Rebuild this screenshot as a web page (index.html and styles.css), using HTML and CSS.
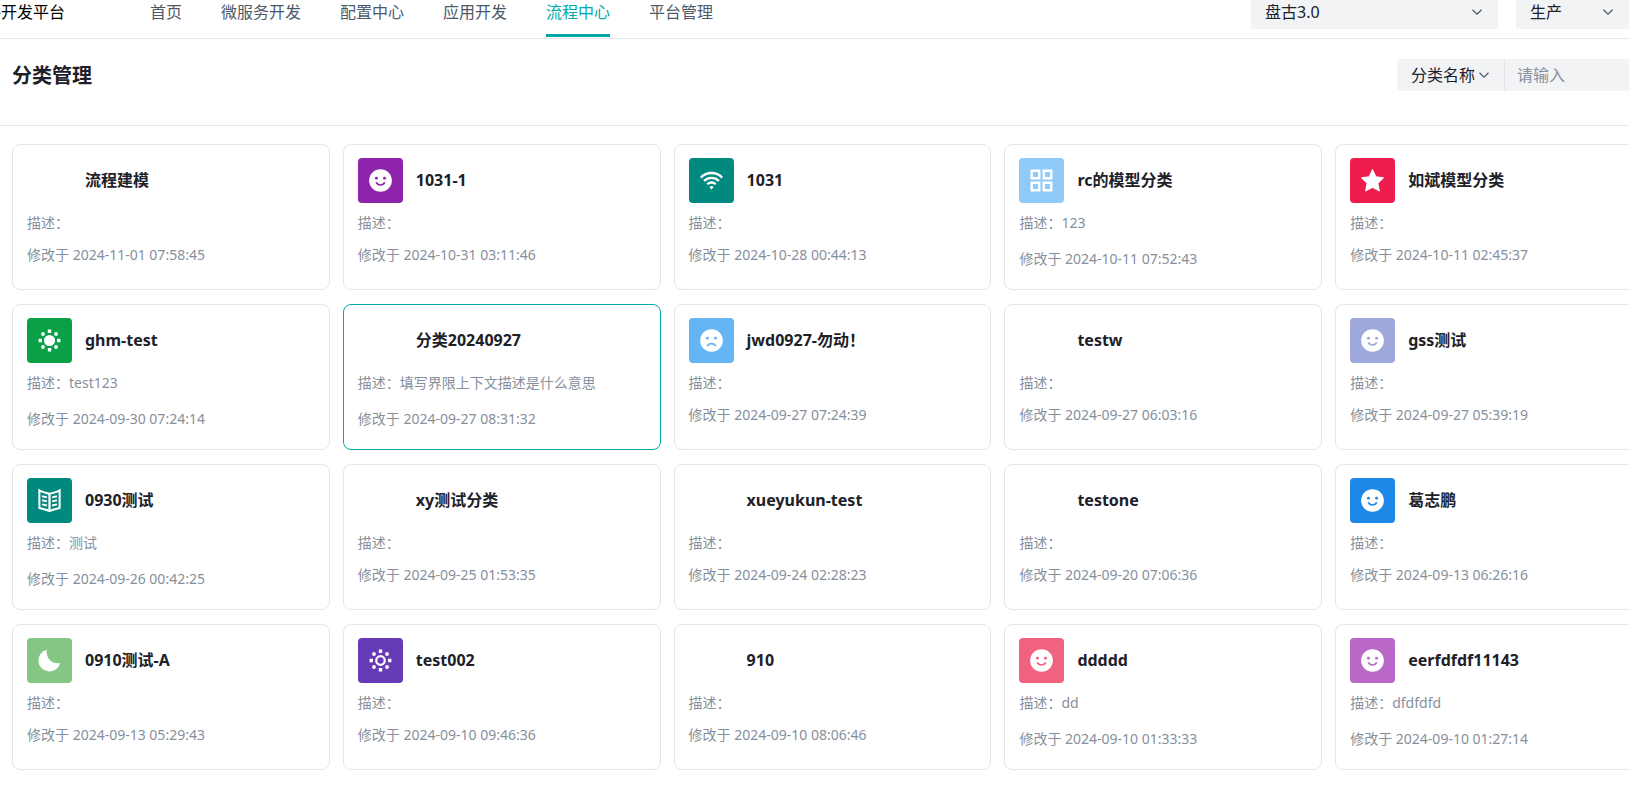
FILE: index.html
```html
<!DOCTYPE html>
<html lang="zh-CN">
<head>
<meta charset="utf-8">
<meta name="viewport" content="width=device-width, initial-scale=1">
<title>分类管理</title>
<link rel="stylesheet" href="styles.css">
</head>
<body>
<svg class="sprite" aria-hidden="true">
  <symbol id="chevron" viewBox="0 0 12 12"><path d="M1.5 3.8 6 8.2l4.500-4.400" fill="none" stroke="currentColor" stroke-width="1.300"/></symbol>
  <symbol id="smile" viewBox="0 0 24 24"><circle cx="12" cy="12" r="10.100" fill="#fff"/><circle cx="8.400" cy="9.900" r="1.300" fill="currentColor"/><circle cx="15.600" cy="9.900" r="1.300" fill="currentColor"/><path d="M8.200 13.700a4.300 4.300 0 0 0 7.600 0" fill="none" stroke="currentColor" stroke-width="1.500"/></symbol>
  <symbol id="sad" viewBox="0 0 24 24"><circle cx="12" cy="12" r="10.100" fill="#fff"/><circle cx="8.400" cy="9.900" r="1.300" fill="currentColor"/><circle cx="15.600" cy="9.900" r="1.300" fill="currentColor"/><path d="M8.200 17a4.300 4.300 0 0 1 7.600 0" fill="none" stroke="currentColor" stroke-width="1.500"/></symbol>
  <symbol id="wifi" viewBox="0 0 24 24"><g fill="none" stroke="#fff" stroke-width="2.100"><path d="M2.500 9.400a13.200 13.200 0 0 1 19 0"/><path d="M5.400 12.400a9.300 9.300 0 0 1 13.200 0"/><path d="M8.300 15.300a5.200 5.200 0 0 1 7.400 0"/></g><path d="M12 19.900l-1.900-2.100a2.600 2.600 0 0 1 3.800 0z" fill="#fff"/></symbol>
  <symbol id="grid" viewBox="0 0 24 24"><g fill="none" stroke="#fff" stroke-width="2.100"><path d="M3.300 3.300h6.700v6.700h-6.700z"/><path d="M14 3.300h6.700v6.700h-6.700z"/><path d="M3.300 14h6.700v6.700h-6.700z"/><path d="M14 14h6.700v6.700h-6.700z"/></g></symbol>
  <symbol id="star" viewBox="0 0 24 24"><path d="M12 2.500l2.900 6.200 6.700.900-4.900 4.700 1.300 6.900-6-3.300-6 3.300 1.300-6.900-4.900-4.700 6.700-.900z" fill="#fff" stroke="#fff" stroke-linejoin="round"/></symbol>
  <symbol id="rays" viewBox="0 0 24 24"><g fill="#fff"><path d="M10.500 2.300h3v3h-3zM10.500 18.700h3v3h-3zM2.300 10.500h3v3h-3zM18.700 10.500h3v3h-3z"/><circle cx="6.200" cy="6.200" r="1.700"/><circle cx="17.800" cy="6.200" r="1.700"/><circle cx="6.200" cy="17.800" r="1.700"/><circle cx="17.800" cy="17.800" r="1.700"/></g></symbol>
  <symbol id="sun" viewBox="0 0 24 24"><use href="#rays"/><circle cx="12" cy="12" r="4.900" fill="#fff"/></symbol>
  <symbol id="sun-line" viewBox="0 0 24 24"><use href="#rays"/><circle cx="12" cy="12" r="3.800" fill="none" stroke="#fff" stroke-width="2"/></symbol>
  <symbol id="moon" viewBox="0 0 24 24"><path d="M9.500 2.500C8.800 9.500 13.500 15.600 21.400 14.400A9.800 9.800 0 1 1 9.500 2.500z" fill="#fff"/></symbol>
  <symbol id="book" viewBox="0 0 24 24"><g fill="none" stroke="#fff" stroke-width="1.800"><path d="M12 5.900C9 5.300 5.600 4.500 3 3v15.600c3.200.700 6.200 1.500 9 2.700 2.800-1.200 5.800-2 9-2.700V3c-2.600 1.500-6 2.300-9 2.900z"/><path d="M12 5.700v15.600" stroke-width="2"/><path d="M5.400 8.200l4.300 1M5.400 11.800l4.300 1M5.400 15.400l4.300 1M18.600 8.200l-4.300 1M18.600 11.800l-4.300 1M18.600 15.400l-4.300 1" stroke-width="1.700"/></g></symbol>
</svg>

<header class="topbar">
  <div class="brand"><span>件开发平台</span></div>
  <nav class="nav">
    <a href="#">首页</a>
    <a href="#">微服务开发</a>
    <a href="#">配置中心</a>
    <a href="#">应用开发</a>
    <a class="active" href="#" aria-current="page">流程中心</a>
    <a href="#">平台管理</a>
  </nav>
  <div class="switchers">
    <div class="picker picker-project">
      <select aria-label="项目"><option>盘古3.0</option></select>
      <svg class="chevron"><use href="#chevron"/></svg>
    </div>
    <div class="picker picker-env">
      <select aria-label="环境"><option>生产</option></select>
      <svg class="chevron"><use href="#chevron"/></svg>
    </div>
  </div>
</header>

<section class="page-head">
  <h1>分类管理</h1>
  <form class="search">
    <div class="picker picker-field">
      <select aria-label="搜索字段"><option>分类名称</option></select>
      <svg class="chevron"><use href="#chevron"/></svg>
    </div>
    <input type="text" placeholder="请输入" aria-label="搜索内容">
  </form>
</section>

<main class="cards">
  <article class="card"><div class="card-head"><span class="tile"></span><h2>流程建模</h2></div><p class="desc">描述：</p><p class="date">修改于 2024-11-01 07:58:45</p></article>
  <article class="card"><div class="card-head"><span class="tile purple"><svg><use href="#smile"/></svg></span><h2>1031-1</h2></div><p class="desc">描述：</p><p class="date">修改于 2024-10-31 03:11:46</p></article>
  <article class="card"><div class="card-head"><span class="tile teal"><svg><use href="#wifi"/></svg></span><h2>1031</h2></div><p class="desc">描述：</p><p class="date">修改于 2024-10-28 00:44:13</p></article>
  <article class="card"><div class="card-head"><span class="tile sky"><svg><use href="#grid"/></svg></span><h2>rc的模型分类</h2></div><p class="desc filled">描述：123</p><p class="date">修改于 2024-10-11 07:52:43</p></article>
  <article class="card"><div class="card-head"><span class="tile red"><svg><use href="#star"/></svg></span><h2>如斌模型分类</h2></div><p class="desc">描述：</p><p class="date">修改于 2024-10-11 02:45:37</p></article>

  <article class="card"><div class="card-head"><span class="tile green"><svg><use href="#sun"/></svg></span><h2>ghm-test</h2></div><p class="desc filled">描述：test123</p><p class="date">修改于 2024-09-30 07:24:14</p></article>
  <article class="card selected"><div class="card-head"><span class="tile"></span><h2>分类20240927</h2></div><p class="desc filled">描述：填写界限上下文描述是什么意思</p><p class="date">修改于 2024-09-27 08:31:32</p></article>
  <article class="card"><div class="card-head"><span class="tile azure"><svg><use href="#sad"/></svg></span><h2>jwd0927-勿动！</h2></div><p class="desc">描述：</p><p class="date">修改于 2024-09-27 07:24:39</p></article>
  <article class="card"><div class="card-head"><span class="tile"></span><h2>testw</h2></div><p class="desc">描述：</p><p class="date">修改于 2024-09-27 06:03:16</p></article>
  <article class="card"><div class="card-head"><span class="tile lavender"><svg><use href="#smile"/></svg></span><h2>gss测试</h2></div><p class="desc">描述：</p><p class="date">修改于 2024-09-27 05:39:19</p></article>

  <article class="card"><div class="card-head"><span class="tile teal"><svg><use href="#book"/></svg></span><h2>0930测试</h2></div><p class="desc filled">描述：测试</p><p class="date">修改于 2024-09-26 00:42:25</p></article>
  <article class="card"><div class="card-head"><span class="tile"></span><h2>xy测试分类</h2></div><p class="desc">描述：</p><p class="date">修改于 2024-09-25 01:53:35</p></article>
  <article class="card"><div class="card-head"><span class="tile"></span><h2>xueyukun-test</h2></div><p class="desc">描述：</p><p class="date">修改于 2024-09-24 02:28:23</p></article>
  <article class="card"><div class="card-head"><span class="tile"></span><h2>testone</h2></div><p class="desc">描述：</p><p class="date">修改于 2024-09-20 07:06:36</p></article>
  <article class="card"><div class="card-head"><span class="tile blue"><svg><use href="#smile"/></svg></span><h2>葛志鹏</h2></div><p class="desc">描述：</p><p class="date">修改于 2024-09-13 06:26:16</p></article>

  <article class="card"><div class="card-head"><span class="tile mint"><svg><use href="#moon"/></svg></span><h2>0910测试-A</h2></div><p class="desc">描述：</p><p class="date">修改于 2024-09-13 05:29:43</p></article>
  <article class="card"><div class="card-head"><span class="tile violet"><svg><use href="#sun-line"/></svg></span><h2>test002</h2></div><p class="desc">描述：</p><p class="date">修改于 2024-09-10 09:46:36</p></article>
  <article class="card"><div class="card-head"><span class="tile"></span><h2>910</h2></div><p class="desc">描述：</p><p class="date">修改于 2024-09-10 08:06:46</p></article>
  <article class="card"><div class="card-head"><span class="tile pink"><svg><use href="#smile"/></svg></span><h2>ddddd</h2></div><p class="desc filled">描述：dd</p><p class="date">修改于 2024-09-10 01:33:33</p></article>
  <article class="card"><div class="card-head"><span class="tile orchid"><svg><use href="#smile"/></svg></span><h2>eerfdfdf11143</h2></div><p class="desc filled">描述：dfdfdfd</p><p class="date">修改于 2024-09-10 01:27:14</p></article>
</main>
</body>
</html>
```
FILE: styles.css
```css
* { box-sizing: border-box; }

body {
  margin: 0;
  overflow: hidden;
  background: #fff;
  color: #1d2129;
  font: 16px/24px "Noto Sans", "Noto Sans CJK SC", sans-serif;
}

h1, h2, p { margin: 0; }

select, input {
  font: inherit;
  color: inherit;
  border: 0;
  margin: 0;
  outline: 0;
  background: #f2f3f5;
}

.sprite { display: none; }

/* top bar */
.topbar {
  display: flex;
  align-items: stretch;
  height: 39px;
  border-bottom: 1px solid #e5e6eb;
}

.brand {
  display: flex;
  justify-content: flex-end;
  width: 65px;
  margin-right: 85px;
  overflow: hidden;
  white-space: nowrap;
  color: #000;
}

.nav {
  display: flex;
  gap: 39px;
  margin-bottom: 1px;
}

.nav a {
  color: #4e5969;
  text-decoration: none;
  white-space: nowrap;
  border-bottom: 3px solid transparent;
}

.nav .active {
  color: #00aaa6;
  border-color: #00aaa6;
}

.switchers {
  display: flex;
  gap: 18px;
  margin-left: auto;
}

.picker { position: relative; }

.picker select {
  width: 100%;
  height: 100%;
  padding: 0 14px;
  appearance: none;
}

.chevron {
  position: absolute;
  top: 50%;
  right: 15px;
  width: 12px;
  height: 12px;
  margin-top: -6px;
  color: #4e5969;
  pointer-events: none;
}

.picker-project { width: 247px; height: 29px; }
.picker-env { width: 113px; height: 29px; }
.switchers select { padding-bottom: 5px; border-radius: 0 0 2px 2px; }
.switchers .chevron { top: 12px; }

/* page heading */
.page-head {
  display: flex;
  justify-content: space-between;
  align-items: flex-start;
  height: 87px;
  padding: 20px 0 0 12px;
  border-bottom: 1px solid #e5e6eb;
}

.page-head h1 {
  font-size: 20px;
  line-height: 34px;
  font-weight: 700;
}

.search { display: flex; height: 32px; }
.picker-field { width: 107px; }
.picker-field select { border-radius: 2px 0 0 2px; }
.picker-field .chevron { right: 14px; }

.search input {
  width: 125px;
  padding: 0 12px;
  border-left: 1px solid #e5e6eb;
}

.search input::placeholder { color: #86909c; opacity: 1; }

/* cards: the grid runs past the right edge of the window */
.cards {
  display: grid;
  grid-template-columns: repeat(5, minmax(0, 1fr));
  gap: 14px 13px;
  margin: 18px -24px 0 12px;
}

.card {
  min-height: 146px;
  padding: 13px 14px 19px;
  border: 1px solid #e5e6eb;
  border-radius: 8px;
}

.card.selected { border-color: #00aaa6; }

.card-head {
  display: flex;
  align-items: center;
  gap: 13px;
}

.card-head h2 {
  padding-bottom: 2px;
  font-size: 16px;
  line-height: 24px;
  font-weight: 700;
}

.tile {
  display: grid;
  place-items: center;
  flex: none;
  width: 45px;
  height: 45px;
  border-radius: 4px;
}

.tile svg { width: 27px; height: 27px; }
.tile:not(:empty) { background: currentColor; }

.purple { color: #8e24aa; }
.teal { color: #00897f; }
.sky { color: #90caf9; }
.red { color: #ee1d4e; }
.green { color: #09a046; }
.azure { color: #64b5f6; }
.lavender { color: #9fa8da; }
.blue { color: #1e88e8; }
.mint { color: #84c785; }
.violet { color: #673ab7; }
.pink { color: #f06280; }
.orchid { color: #ba68c8; }

.desc, .date {
  color: #86909c;
  font-size: 14px;
  line-height: 22px;
}

.desc { margin: 9px 0 10px; }
.desc.filled { margin-bottom: 14px; }
```
